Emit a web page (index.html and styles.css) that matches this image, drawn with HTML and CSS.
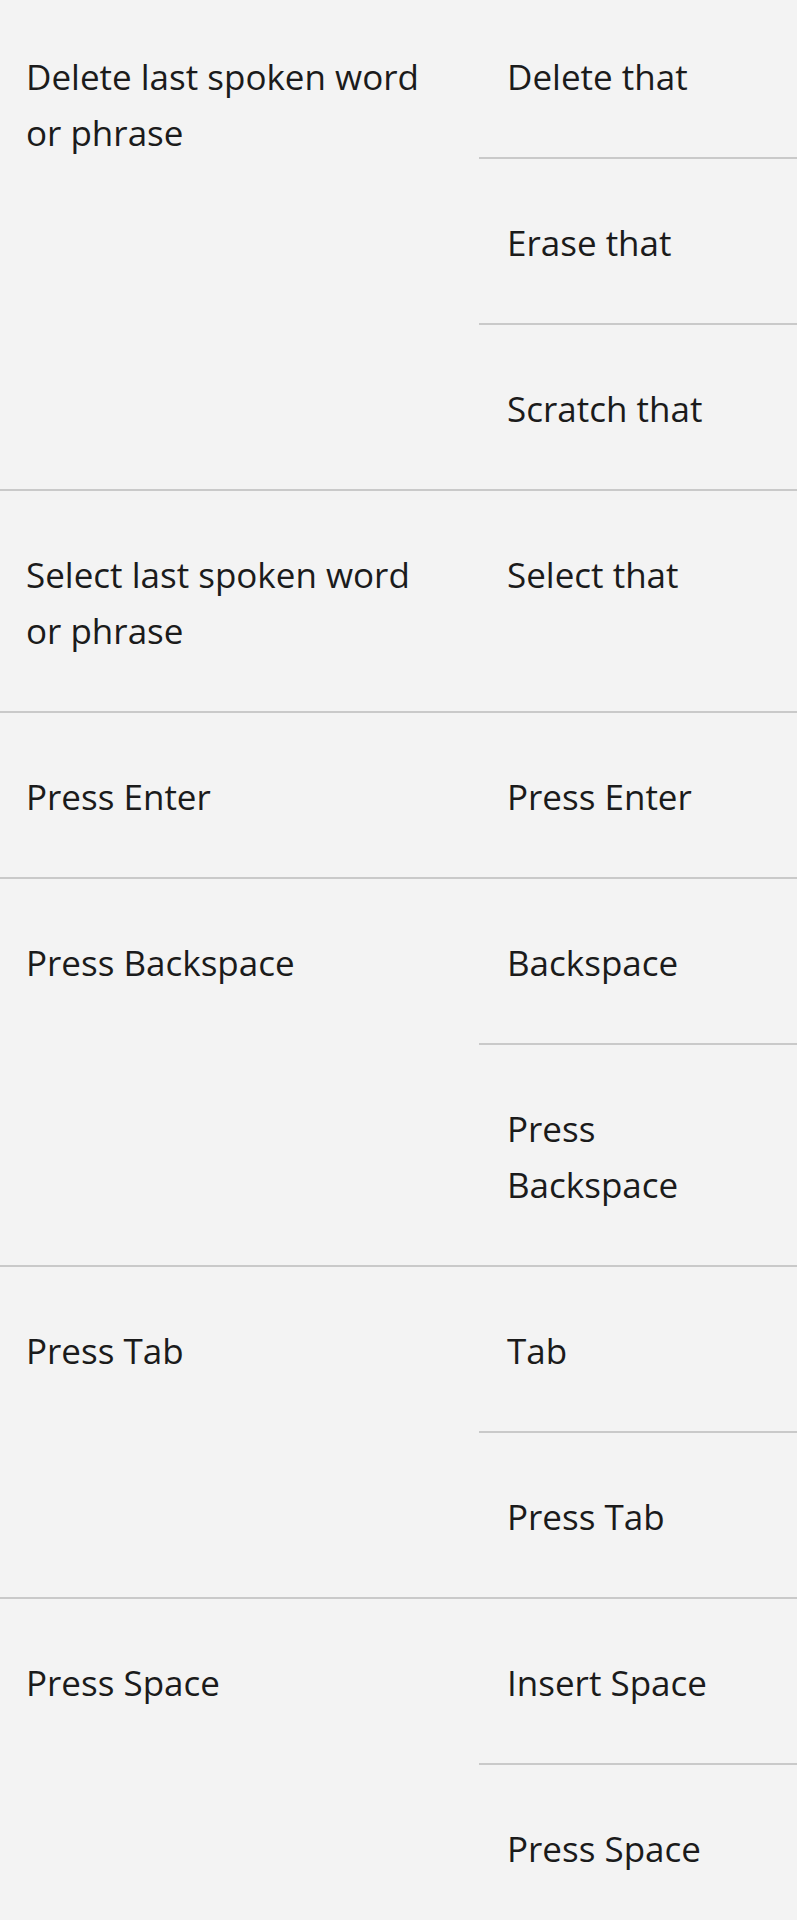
FILE: index.html
```html
<!DOCTYPE html>
<html lang="en">
<head>
<meta charset="utf-8">
<title>Voice commands</title>
<link rel="stylesheet" href="styles.css">
</head>
<body>
<div class="table">
  <div class="row">
    <div class="action">Delete last spoken word or phrase</div>
    <div class="phrases">
      <div class="phrase">Delete that</div>
      <div class="phrase">Erase that</div>
      <div class="phrase">Scratch that</div>
    </div>
  </div>
  <div class="row">
    <div class="action">Select last spoken word or phrase</div>
    <div class="phrases">
      <div class="phrase">Select that</div>
    </div>
  </div>
  <div class="row">
    <div class="action">Press Enter</div>
    <div class="phrases">
      <div class="phrase">Press Enter</div>
    </div>
  </div>
  <div class="row">
    <div class="action">Press Backspace</div>
    <div class="phrases">
      <div class="phrase">Backspace</div>
      <div class="phrase">Press Backspace</div>
    </div>
  </div>
  <div class="row">
    <div class="action">Press Tab</div>
    <div class="phrases">
      <div class="phrase">Tab</div>
      <div class="phrase">Press Tab</div>
    </div>
  </div>
  <div class="row">
    <div class="action">Press Space</div>
    <div class="phrases">
      <div class="phrase">Insert Space</div>
      <div class="phrase">Press Space</div>
    </div>
  </div>
</div>
</body>
</html>
```

FILE: styles.css
```css
html, body {
  margin: 0;
  padding: 0;
  background: #f3f3f3;
}

body {
  font-family: "Open Sans", "Noto Sans", sans-serif;
  font-size: 35px;
  line-height: 56px;
  color: #1b1b1b;
  overflow: hidden;
}

.table {
  margin-top: -7px;
}

.row {
  display: flex;
  border-bottom: 2px solid #c9c9c9;
}

.action {
  width: 479px;
  flex: none;
  box-sizing: border-box;
  padding: 56px 44px 52px 26px;
}

.phrases {
  flex: 1;
  min-width: 0;
  display: flex;
  flex-direction: column;
}

.phrase {
  padding: 56px 40px 52px 28px;
}

.phrase + .phrase {
  border-top: 2px solid #c9c9c9;
}
```
